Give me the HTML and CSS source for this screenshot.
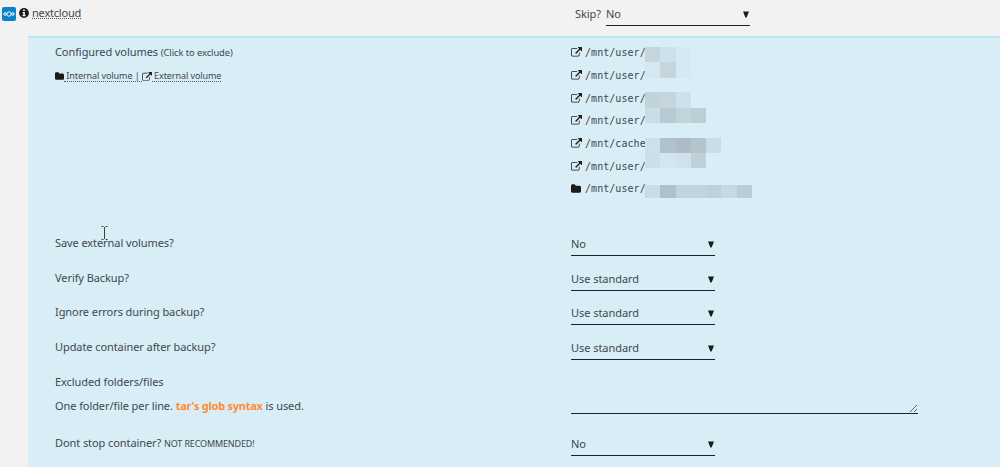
FILE: index.html
```
<!DOCTYPE html>
<html lang="en">
<head>
    <meta charset="UTF-8">
    <meta name="viewport" content="width=device-width, initial-scale=1.0">
    <title>Backup settings</title>
    <link rel="stylesheet" href="styles.css">
</head>
<body>
    <svg class="symbols" width="0" height="0">
        <symbol id="external" viewBox="0 0 1792 1600">
            <path d="M1408 928v320q0 119-84.500 203.500T1120 1536H288q-119 0-203.500-84.500T0 1248V416q0-119 84.500-203.500T288 128h704q14 0 23 9t9 23v64q0 14-9 23t-23 9H288q-66 0-113 47t-47 113v832q0 66 47 113t113 47h832q66 0 113-47t47-113V928q0-14 9-23t23-9h64q14 0 23 9t9 23zm384-864v512q0 26-19 45t-45 19-45-19l-176-176-652 652q-10 10-23 10t-23-10L695 983q-10-10-10-23t10-23l652-652-176-176q-19-19-19-45t19-45 45-19h512q26 0 45 19t19 45z"/>
        </symbol>
        <symbol id="folder" viewBox="0 0 1664 1408">
            <path d="M1664 480v704q0 92-66 158t-158 66H224q-92 0-158-66T0 1184V224q0-92 66-158T224 0h320q92 0 158 66t66 158v32h672q92 0 158 66t66 158z"/>
        </symbol>
        <symbol id="caret" viewBox="0 0 6 7">
            <path d="M0 0.500h6L3.600 6.500H2.400z"/>
        </symbol>
    </svg>

    <div class="header">
        <div class="app">
            <svg class="logo" viewBox="0 0 14 14">
                <rect width="14" height="14" rx="2" fill="#0882c9"/>
                <g fill="none" stroke="#fff" stroke-width="1">
                    <circle cx="7" cy="7" r="2.200"/>
                    <circle cx="3.100" cy="7" r="1.300"/>
                    <circle cx="10.900" cy="7" r="1.300"/>
                </g>
            </svg>
            <svg class="info" viewBox="0 0 10 10">
                <circle cx="5" cy="5" r="4.900" fill="#1c1b1b"/>
                <path d="M4.100 1.500h1.800v1.500H4.100zM3.500 3.900h2.400v3.200h.7v1.200H3.500V7.100h.7v-2h-.7z" fill="#f2f2f2"/>
            </svg>
            <span class="name">nextcloud</span>
        </div>
        <div class="skip">
            <label for="skip">Skip?</label>
            <div class="select">
                <select id="skip"><option>No</option><option>Yes</option></select>
                <svg class="caret"><use href="#caret"/></svg>
            </div>
        </div>
    </div>

    <div class="panel">
        <div class="row volumes">
            <div class="label">
                <div>Configured volumes <small>(Click to exclude)</small></div>
                <div class="legend"><svg class="folder"><use href="#folder"/></svg><span> Internal volume | </span><svg class="external"><use href="#external"/></svg><span> External volume</span></div>
            </div>
            <div class="list" id="volumeList"></div>
        </div>
        <div class="row">
            <label class="label" for="save">Save external volumes?</label>
            <div class="select">
                <select id="save"><option>No</option><option>Yes</option></select>
                <svg class="caret"><use href="#caret"/></svg>
            </div>
        </div>
        <div class="row">
            <label class="label" for="verify">Verify Backup?</label>
            <div class="select">
                <select id="verify"><option>Use standard</option></select>
                <svg class="caret"><use href="#caret"/></svg>
            </div>
        </div>
        <div class="row">
            <label class="label" for="ignore">Ignore errors during backup?</label>
            <div class="select">
                <select id="ignore"><option>Use standard</option></select>
                <svg class="caret"><use href="#caret"/></svg>
            </div>
        </div>
        <div class="row">
            <label class="label" for="update">Update container after backup?</label>
            <div class="select">
                <select id="update"><option>Use standard</option></select>
                <svg class="caret"><use href="#caret"/></svg>
            </div>
        </div>
        <div class="row exclude">
            <div class="label">
                <div>Excluded folders/files</div>
                <p>One folder/file per line. <b>tar's glob syntax</b> is used.</p>
            </div>
            <textarea id="exclude"></textarea>
        </div>
        <div class="row">
            <label class="label" for="dontStop">Dont stop container? <small class="warning">NOT RECOMMENDED!</small></label>
            <div class="select">
                <select id="dontStop"><option>No</option><option>Yes</option></select>
                <svg class="caret"><use href="#caret"/></svg>
            </div>
        </div>
    </div>

    <!-- text cursor -->
    <svg class="cursor" viewBox="0 0 7 14">
        <path d="M.500.500h2M4.500.500h2M3.500 1v12M.500 13.500h2M4.500 13.500h2" fill="none" stroke="#453c3b"/>
    </svg>

    <script>
    // mask: colours of the blocks that hide the rest of the path, one array per line
    const volumes = [
        { icon: 'external', path: '/mnt/user/', mask: [['#c4d5de', '#cee0e9', '#d6e9f2'], ['#d5e8f1', '#c4d5de', '#d6e9f2']] },
        { icon: 'external', path: '/mnt/user/' },
        { icon: 'external', path: '/mnt/user/', mask: [['#c2d2db', '#c4d5de', '#cee0e9'], ['#cadce5', '#b8c9d1', '#c2d3dc', '#bdced7']] },
        { icon: 'external', path: '/mnt/user/' },
        { icon: 'external', path: '/mnt/cache', mask: [['#cddfe8', '#b2c2ca', '#adbcc4', '#b3c4cc', '#cadce5'], ['#ccdee7', '#d3e6ef', '#cfe1ea', '#bfd0d8']] },
        { icon: 'external', path: '/mnt/user/' },
        { icon: 'folder', path: '/mnt/user/', mask: [['#c9dbe4', '#b0c0c8', '#c2d3db', '#c2d3db', '#bfd0d8', '#c6d8e0', '#bbccd4']] }
    ];

    document.getElementById('volumeList').innerHTML = volumes.map(volume => {
        const mask = (volume.mask || []).map(line =>
            `<div class="line">${line.map(color => `<i style="background:${color}"></i>`).join('')}</div>`
        ).join('');
        return `<div class="volume">
            <svg class="${volume.icon}"><use href="#${volume.icon}"/></svg>
            <code>${volume.path}</code>
            <div class="mask">${mask}</div>
        </div>`;
    }).join('');
    </script>
</body>
</html>
```

FILE: styles.css
```
* {
    box-sizing: border-box;
}

body {
    margin: 0;
    height: 467px;
    overflow: hidden;
    background-color: #f2f2f2;
    color: #3f474b;
    font-family: "Noto Sans", sans-serif;
    font-size: 11px;
    letter-spacing: -0.080px;
    line-height: 16px;
}

.symbols {
    position: absolute;
}

small {
    font-size: 9.400px;
}

.warning {
    font-size: 9px;
    letter-spacing: -0.150px;
}

.header {
    display: grid;
    grid-template-columns: 575px 1fr;
    height: 36px;
}

.app {
    display: flex;
    align-items: flex-start;
    padding: 5px 0 0 2px;
}

.logo {
    width: 14px;
    height: 14px;
    margin-top: 2px;
}

.info {
    width: 10px;
    height: 10px;
    margin: 3px 3px 0 3px;
}

.name {
    height: 14px;
    border-bottom: 1px dotted #555;
    letter-spacing: -0.200px;
}

.skip {
    display: flex;
    padding-top: 6px;
}

.skip label {
    width: 31px;
}

.select {
    position: relative;
    width: 144px;
    height: 21px;
    border-bottom: 1px solid #222;
}

.skip .select {
    height: 20px;
}

select {
    display: block;
    appearance: none;
    width: 100%;
    height: 16px;
    padding: 0;
    border: none;
    background: transparent;
    color: inherit;
    font: inherit;
    letter-spacing: -0.050px;
}

.row select {
    margin-top: 1px;
}

.caret {
    position: absolute;
    right: 1px;
    top: 5px;
    width: 6px;
    height: 7px;
    fill: #1c1b1b;
    pointer-events: none;
}

.row .caret {
    top: 6px;
}

.panel {
    height: 431px;
    margin-left: 28px;
    padding: 6px 0 0 27px;
    border-top: 2px solid #bce8f1;
    background-color: #d9edf7;
}

.row {
    display: grid;
    grid-template-columns: 516px 1fr;
    height: 34.700px;
}

.volumes {
    height: 191px;
}

.legend {
    display: flex;
    align-items: center;
    margin-top: 9px;
    font-size: 9px;
    letter-spacing: -0.080px;
}

.legend span {
    height: 12px;
    line-height: 11px;
    border-bottom: 1px dotted #555;
    white-space: pre;
}

.folder {
    width: 10px;
    height: 9px;
    fill: #1c1b1b;
}

.external {
    width: 11px;
    height: 10px;
    fill: #1c1b1b;
}

.legend .folder {
    width: 9px;
    height: 8px;
}

.legend .external {
    width: 10px;
    height: 9px;
}

.volume {
    position: relative;
    display: flex;
    align-items: center;
    gap: 3px;
    height: 22.700px;
    margin-top: -2px;
    margin-bottom: 2px;
}

.volume svg {
    margin-bottom: 2px;
}

.volume .folder {
    margin-right: 1px;
}

code {
    width: 60px;
    overflow: hidden;
    font-family: "DejaVu Sans Mono", monospace;
    font-size: 10px;
    letter-spacing: 0.050px;
}

.mask {
    position: absolute;
    left: 74px;
    top: 5px;
    z-index: 1;
}

.line {
    display: flex;
    height: 15.300px;
}

.line i {
    width: 15.300px;
}

.volume:last-child .mask {
    top: 7px;
}

.volume:last-child .line {
    height: 13px;
}

.exclude {
    height: 61px;
}

.exclude p {
    margin: 8px 0 0;
}

b {
    color: #ff8c2f;
    letter-spacing: -0.250px;
}

textarea {
    width: 347px;
    height: 40px;
    padding: 0;
    border: none;
    border-bottom: 1px solid #222;
    background: transparent;
    resize: both;
}

.cursor {
    position: absolute;
    left: 101px;
    top: 226px;
    width: 7px;
    height: 14px;
}
```
